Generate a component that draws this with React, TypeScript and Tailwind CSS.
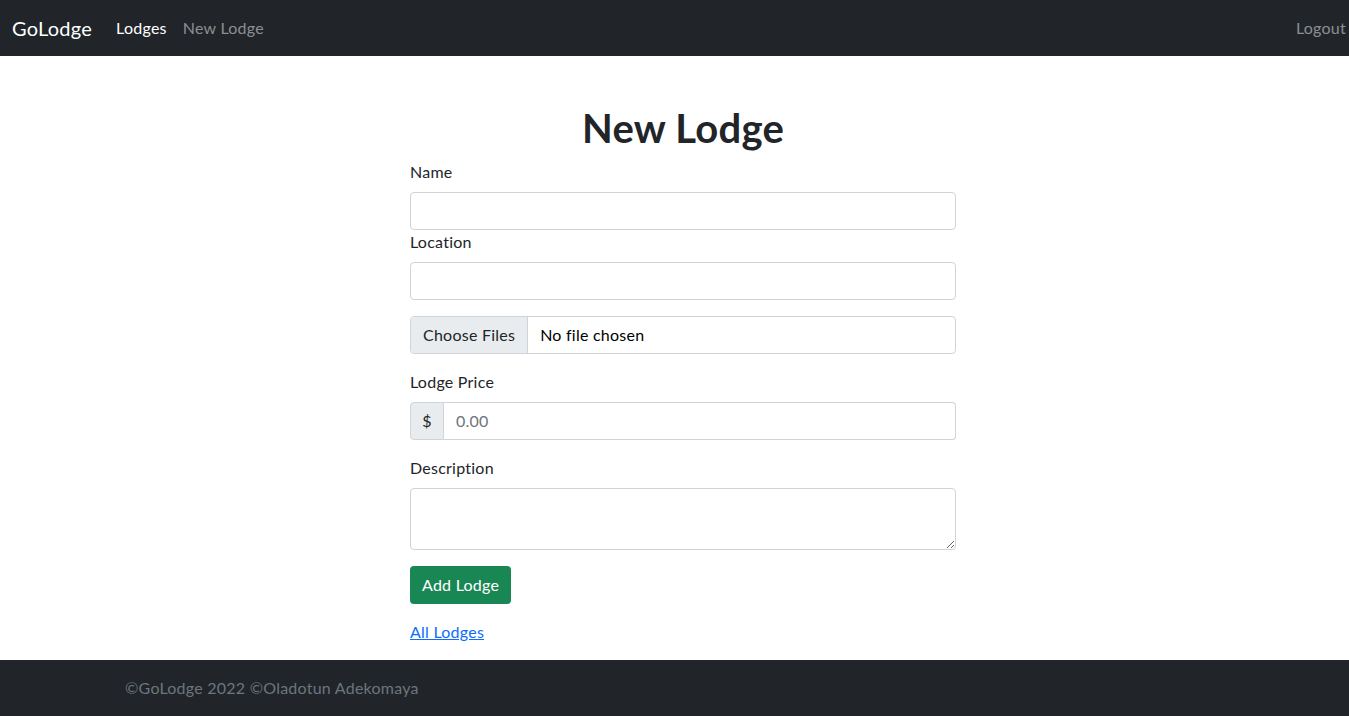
import React from "react";

export default function App() {
  const font = { fontFamily: "Lato, 'Noto Sans', sans-serif" };
  return (
    <div className="min-h-[716px] flex flex-col bg-white text-[#212529] text-[16px] leading-6 tracking-[0.015em]" style={font}>
      <nav className="h-14 bg-[#212529] flex items-center pl-3 pr-[3px]">
        <span className="text-[20px] text-white mr-4 leading-[30px]">GoLodge</span>
        <a className="px-2 text-white">Lodges</a>
        <a className="px-2 text-[#8c8f92]">New Lodge</a>
        <a className="ml-auto text-[#8c8f92]">Logout</a>
      </nav>

      <main className="flex-1 flex justify-center pl-[17px] pt-12 pb-4">
        <div className="w-[546px] flex flex-col">
          <h1 className="text-[40px] leading-[48px] font-bold text-center mb-2">New Lodge</h1>

          <label className="mb-2">Name</label>
          <input className="h-[38px] border border-[#ced4da] rounded-[4px] px-3 outline-none" />

          <label className="mb-2">Location</label>
          <input className="h-[38px] border border-[#ced4da] rounded-[4px] px-3 outline-none" />

          <div className="mt-4 h-[38px] border border-[#ced4da] rounded-[4px] flex overflow-hidden">
            <div className="bg-[#e9ecef] border-r border-[#ced4da] px-3 flex items-center">Choose Files</div>
            <div className="px-3 flex items-center text-[#000]">No file chosen</div>
          </div>

          <label className="mt-4 mb-2">Lodge Price</label>
          <div className="h-[38px] flex">
            <span className="w-[34px] bg-[#e9ecef] border border-[#ced4da] rounded-l-[4px] flex items-center justify-center">$</span>
            <input
              placeholder="0.00"
              className="flex-1 border border-l-0 border-[#ced4da] rounded-r-[4px] px-3 outline-none placeholder:text-[#6c757d]"
            />
          </div>

          <label className="mt-4 mb-2">Description</label>
          <textarea rows={2} className="h-[62px] border border-[#ced4da] rounded-[4px] px-3 py-1.5 outline-none" />

          <div className="mt-4">
            <button className="h-[38px] bg-[#198754] text-white px-3 rounded-[4px] tracking-[0.015em]">Add Lodge</button>
          </div>

          <a className="mt-4 text-[#0d6efd] underline self-start">All Lodges</a>
        </div>
      </main>

      <footer className="h-14 bg-[#212529] flex justify-center pl-[17px]">
        <div className="w-[1140px] px-3 flex items-center text-[#6c757d]">
          ©GoLodge 2022 ©Oladotun Adekomaya
        </div>
      </footer>
    </div>
  );
}
